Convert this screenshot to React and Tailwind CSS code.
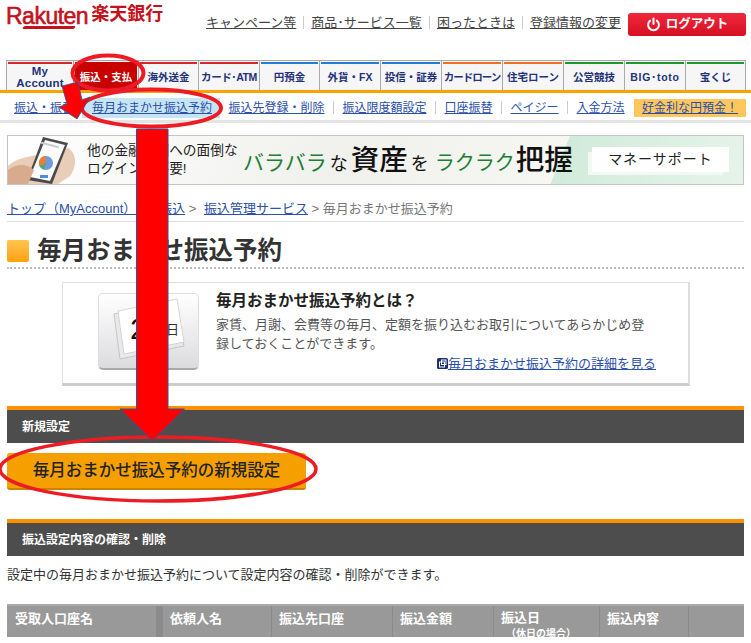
import React from "react";

const tabs = [
  { label: "My Account", w: "w-[68px]", color: "border-t-[#d9262c]", cls: "whitespace-normal px-[12px] text-[11.5px] leading-[12px] tracking-[0.2px]" },
  { label: "振込・支払", w: "w-[66px]", color: "border-t-[#c80000]", active: true },
  { label: "海外送金", w: "w-[61px]", color: "border-t-[#d9262c]" },
  { label: "カード･ATM", w: "w-[62px]", color: "border-t-[#d9262c]", track: "tracking-[-0.4px]" },
  { label: "円預金", w: "w-[61px]", color: "border-t-[#1f7fd8]" },
  { label: "外貨・FX", w: "w-[62px]", color: "border-t-[#1f7fd8]" },
  { label: "投信・証券", w: "w-[62px]", color: "border-t-[#1f7fd8]" },
  { label: "カードローン", w: "w-[62px]", color: "border-t-[#f07020]", track: "tracking-[-1px]" },
  { label: "住宅ローン", w: "w-[62px]", color: "border-t-[#f07020]" },
  { label: "公営競技", w: "w-[62px]", color: "border-t-[#1b9a2c]" },
  { label: "BIG･toto", w: "w-[62px]", color: "border-t-[#1b9a2c]", track: "tracking-[0.7px]" },
  { label: "宝くじ", w: "w-[61px]", color: "border-t-[#1b9a2c]" },
];

const FONT = "font-['Liberation_Sans','Noto_Sans_CJK_JP',sans-serif]";

function Sep() {
  return <span className="w-px h-[13px] bg-[#ccc] shrink-0" />;
}

function SubLink({ children, className = "" }) {
  return <a className={`text-[#2c4fa8] underline text-[12px] leading-none whitespace-nowrap ${className}`}>{children}</a>;
}

function SectionBar({ children, className = "" }) {
  return (
    <div className={`mx-[7px] h-[37px] border-t-4 border-t-[#ff9000] bg-[#4d4d4d] flex items-center pl-[15px] text-white text-[12px] font-bold ${className}`}>
      {children}
    </div>
  );
}

function Phone() {
  return (
    <svg width="70" height="48" viewBox="0 0 70 48" className="shrink-0">
      <path d="M0 48V30C6 24 14 22 24 20L60 12C68 16 70 30 62 40L50 48Z" fill="#e8cdb8" />
      <path d="M35 1L60 7L44 48L19 44Z" fill="#4a4a4a" />
      <path d="M37 4L57 9L42 45L22 41Z" fill="#fbfbfb" />
      <rect x="33" y="8" width="18" height="2" fill="#ccc" transform="rotate(14 42 9)" />
      <circle cx="38" cy="27" r="7" fill="#6b9be0" />
      <path d="M38 27V20A7 7 0 0 0 31.5 30Z" fill="#e2823a" />
      <path d="M38 27L31.5 30A7 7 0 0 0 36 33.8Z" fill="#58a868" />
      <rect x="32" y="39" width="8" height="3" fill="#4a8ed8" />
      <path d="M0 48V34C8 28 18 27 26 34L20 48Z" fill="#d8ab8c" />
    </svg>
  );
}

function Calendar() {
  return (
    <div className="ml-[35px] mt-[10px] w-[101px] h-[77px] shrink-0 rounded-[5px] border border-[#ddd] border-b-[2px] border-b-[#aaa] bg-gradient-to-b from-white to-[#dcdcdf] flex items-center justify-center">
      <svg width="84" height="66" viewBox="0 0 84 66">
        <path d="M7 16L66 3L77 48L13 61Z" fill="#e9e9e9" stroke="#bbb" strokeWidth="0.8" />
        <path d="M11 13L70 1L77 44L17 56Z" fill="#fff" stroke="#ccc" strokeWidth="0.8" />
        <text x="23" y="41" fontSize="30" fill="#111" fontFamily="Liberation Sans">2</text>
        <text x="59" y="36" fontSize="13" fill="#333" fontFamily="Noto Sans CJK JP">日</text>
      </svg>
    </div>
  );
}

function Overlay() {
  return (
    <svg width="751" height="643" viewBox="0 0 751 643" className="absolute left-0 top-0 pointer-events-none">
      <ellipse cx="108" cy="73" rx="35.5" ry="17.5" fill="none" stroke="#ed1c24" strokeWidth="4" />
      <ellipse cx="151.5" cy="108" rx="69.5" ry="18.5" fill="none" stroke="#ed1c24" strokeWidth="4" />
      <ellipse cx="158" cy="469" rx="158" ry="32" fill="none" stroke="#ed1c24" strokeWidth="3.5" />
      <path d="M62 86L78 82L82 100L90 97L77 119L59 107L67 104Z" fill="#f00" stroke="#2f5597" strokeWidth="0.8" />
      <path d="M136.5 129H168V409H184.5L152.5 441L120 409H136.5Z" fill="#f00" stroke="#2f5597" strokeWidth="1" />
    </svg>
  );
}

export default function App() {
  return (
    <div className={`relative w-[751px] h-[643px] overflow-hidden bg-white text-[#333] ${FONT}`}>
      <header className="h-[60px] flex items-start">
        <div className="ml-[6px] mt-[5px] w-[157px] shrink-0 flex items-start text-[#c4121c] leading-none whitespace-nowrap">
          <span className="relative text-[23px] tracking-[-0.5px] font-normal [-webkit-text-stroke:0.6px_#c4121c]">
            Rakuten
            <span className="absolute left-[17px] top-[21px] w-[52px] h-[3px] bg-[#c4121c] rounded-[2px] -skew-x-[30deg]" />
          </span>
          <span className="ml-[3px] text-[18px] font-bold">楽天銀行</span>
        </div>
        <nav className="ml-[43px] mt-[16px] flex items-center gap-[7px] text-[13px] leading-none text-[#444] whitespace-nowrap">
          <a className="underline">キャンペーン等</a>
          <Sep />
          <a className="underline">商品･サービス一覧</a>
          <Sep />
          <a className="underline">困ったときは</a>
          <Sep />
          <a className="underline">登録情報の変更</a>
        </nav>
        <button className="ml-[7px] mt-[13px] w-[118px] h-[23px] shrink-0 rounded-[3px] bg-gradient-to-b from-[#f0263a] to-[#d50f22] text-white text-[12.5px] font-bold flex items-center justify-center gap-[5px]">
          <svg width="15" height="15" viewBox="0 0 15 15" fill="none" stroke="white" strokeWidth="2" strokeLinecap="round">
            <path d="M7.5 1.5V7" />
            <path d="M4.2 3.6A5.4 5.4 0 1 0 10.8 3.6" />
          </svg>
          ログアウト
        </button>
      </header>

      <div className="flex pl-[6px] h-[30px]">
        {tabs.map((t) => (
          <div key={t.label} className={`${t.w} shrink-0 border border-[#aaa] border-b-0 bg-[#f6f6f6] p-[1px] pb-0 -mr-px last:mr-0`}>
            <div
              className={`h-full border-t-2 flex items-center justify-center text-center font-bold ${
                t.active ? "bg-[#c80000] text-white" : "text-[#23327a]"
              } ${t.color} ${t.cls || "text-[10.5px] leading-[11px] whitespace-nowrap"} ${t.track || ""}`}
            >
              {t.label}
            </div>
          </div>
        ))}
      </div>
      <div className="h-[3px] bg-[#ffa200]" />

      <nav className="h-[30px] pl-[14px] pt-[2px] flex items-center border-b-[3px] border-b-[#e4e4e4] gap-[8.5px]">
        <SubLink className="w-[60px] overflow-hidden">振込・振替</SubLink>
        <SubLink className="bg-[#c5e5f5] h-[20px] flex items-center pl-[10px] pr-[8px] ml-[-0.5px]">毎月おまかせ振込予約</SubLink>
        <SubLink>振込先登録・削除</SubLink>
        <Sep />
        <SubLink>振込限度額設定</SubLink>
        <Sep />
        <SubLink>口座振替</SubLink>
        <Sep />
        <SubLink>ペイジー</SubLink>
        <Sep />
        <SubLink>入金方法</SubLink>
        <SubLink className="ml-[1px] bg-[#ffc75c] h-[18px] px-[8px] flex items-center">好金利な円預金！</SubLink>
      </nav>

      <section className="mt-[12px] mx-[7px] h-[50px] border border-[#c4c4c4] flex items-center overflow-hidden bg-[linear-gradient(112deg,#fff_0%,#f0f0ec_45%,#f6f6f3_74.5%,#d2ebd9_74.5%,#e6f4ea_100%)]">
        <Phone />
        <p className="ml-[9px] w-[156px] shrink-0 text-[13.7px] leading-[18px] text-[#222] whitespace-nowrap">
          他の金融機関への面倒な<br />ログインも不要!
        </p>
        <p className="whitespace-nowrap text-[#111] flex items-baseline leading-none shrink-0">
          <span className="text-[#1d7e35] text-[21px]">バラバラ</span>
          <span className="text-[18px] ml-[3px]">な</span>
          <span className="text-[28.5px] font-medium ml-[3px]">資産</span>
          <span className="text-[18px] ml-[3px]">を</span>
          <span className="text-[#1d7e35] text-[20px] ml-[6px]">ラクラク</span>
          <span className="text-[28.5px] font-medium ml-[1px]">把握</span>
        </p>
        <div className="ml-auto mr-[14px] mb-[2px] relative w-[137px] h-[25px] bg-white flex items-center justify-center text-[14px] tracking-[1px] text-[#222] whitespace-nowrap shadow-[-5px_4px_0_-1px_#f2f8f3]">
          マネーサポート
        </div>
      </section>

      <div className="mt-[15px] mx-[7px] h-[22px] border-b border-b-[#ddd] text-[13px] leading-[18px] text-[#777] whitespace-nowrap">
        <a className="text-[#2c4fa8] underline">トップ（MyAccount）</a>{" > "}
        <a className="text-[#2c4fa8] underline ml-[8px]">振込</a>{" > "}
        <a className="text-[#2c4fa8] underline ml-[4px]">振込管理サービス</a>{" > "}毎月おまかせ振込予約
      </div>

      <h1 className="mt-[18px] mx-[7px] h-[29px] border-b-2 border-dotted border-b-[#bbb] flex items-start gap-[8px] text-[24.5px] leading-[22px] font-bold text-[#333]">
        <span className="w-[22px] h-[22px] rounded-[2px] bg-gradient-to-b from-[#ffc44d] to-[#ffa200]" />
        毎月おまかせ振込予約
      </h1>

      <section className="mt-[13px] ml-[62px] w-[628px] h-[104px] border border-[#ddd] border-b-[3px] border-b-[#ccc] border-r-[2px] flex">
        <Calendar />
        <div className="ml-[17px] mt-[8px] flex-1">
          <h2 className="text-[15.5px] font-bold leading-[20px] text-[#222] whitespace-nowrap">毎月おまかせ振込予約とは？</h2>
          <p className="mt-[4px] text-[13px] leading-[19px] text-[#555] whitespace-nowrap">
            家賃、月謝、会費等の毎月、定額を振り込むお取引についてあらかじめ登<br />録しておくことができます。
          </p>
          <div className="mt-[4px] w-[440px] flex justify-end items-center text-[13px] leading-none">
            <svg width="11" height="11" viewBox="0 0 11 11" className="shrink-0">
              <rect x="0" y="0" width="11" height="11" rx="1.5" fill="#1c2f70" />
              <rect x="2.5" y="4" width="5" height="5" fill="none" stroke="#fff" />
              <rect x="4.5" y="2" width="4.5" height="4.5" fill="none" stroke="#fff" />
            </svg>
            <a className="text-[#2c4fa8] underline whitespace-nowrap">毎月おまかせ振込予約の詳細を見る</a>
          </div>
        </div>
      </section>

      <SectionBar className="mt-[20px]">新規設定</SectionBar>

      <button className="mt-[10px] ml-[7px] w-[299px] h-[37px] rounded-[3px] border-b-2 border-b-[#c98400] bg-[#f5a000] text-[#222] text-[16.5px] font-medium leading-none flex items-center justify-center whitespace-nowrap">
        毎月おまかせ振込予約の新規設定
      </button>

      <SectionBar className="mt-[29px]">振込設定内容の確認・削除</SectionBar>

      <p className="mt-[10px] ml-[7px] text-[13px] leading-[18px] text-[#333] whitespace-nowrap">設定中の毎月おまかせ振込予約について設定内容の確認・削除ができます。</p>

      <div className="mt-[20px] mx-[7px] h-[33px] flex bg-[#999] text-white text-[13px] font-bold border-t-2 border-t-[#aaa] overflow-hidden">
        <div className="w-[156px] pl-[8px] pt-[3px] border-r-[7px] border-r-[#8b8b8b]">受取人口座名</div>
        <div className="w-[109px] pl-[7px] pt-[3px] border-r border-r-[#8b8b8b]">依頼人名</div>
        <div className="w-[121px] pl-[7px] pt-[3px] border-r border-r-[#8b8b8b]">振込先口座</div>
        <div className="w-[101px] pl-[7px] pt-[3px] border-r border-r-[#8b8b8b]">振込金額</div>
        <div className="w-[106px] pl-[7px] pt-[3px] border-r border-r-[#8b8b8b] leading-[17px]">
          振込日
          <div className="pl-[5px] text-[10px] leading-[13px] mt-[1px]">（休日の場合）</div>
        </div>
        <div className="w-[89px] pl-[7px] pt-[3px] border-r border-r-[#8b8b8b]">振込内容</div>
      </div>

      <Overlay />
    </div>
  );
}
